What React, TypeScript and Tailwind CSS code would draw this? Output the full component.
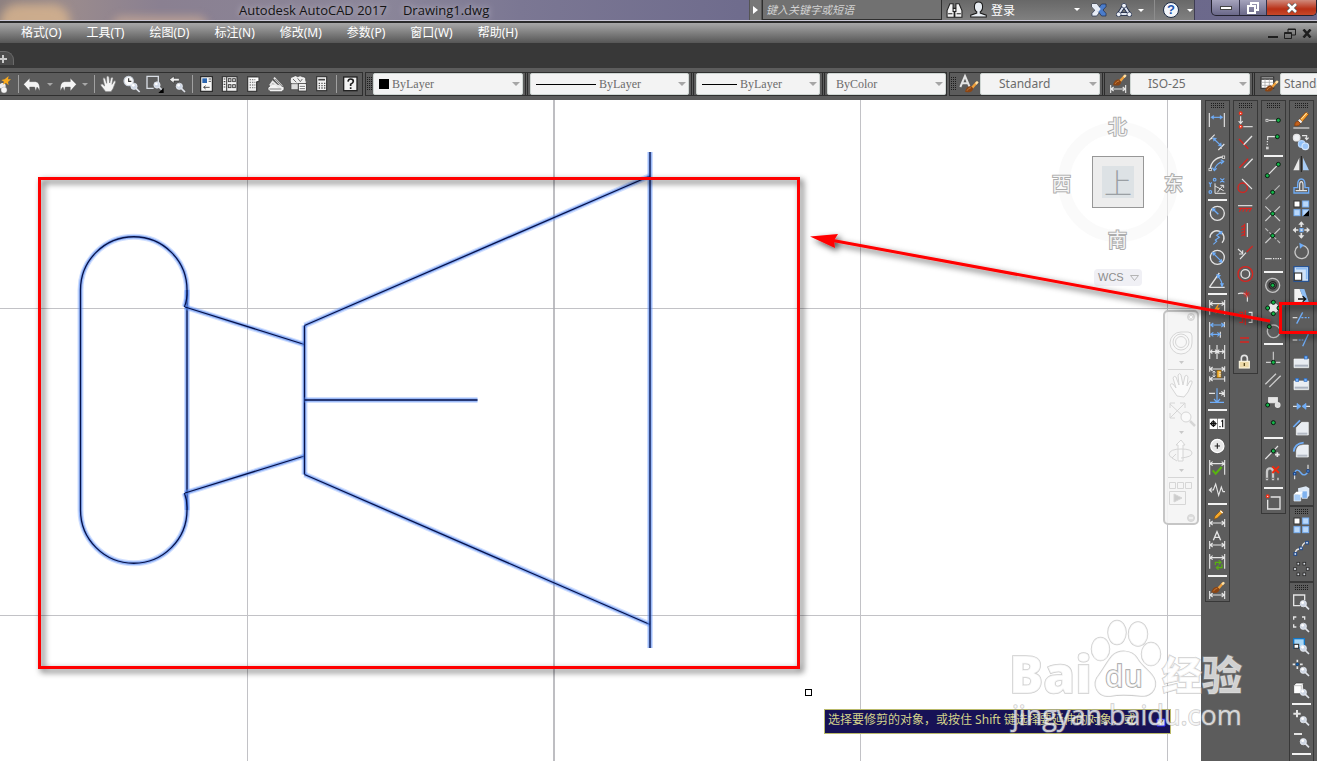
import React from "react";

const W = "#e4e4e4";
const B = "#6fadf8";
const R = "#d8241f";
const N = "#1c4587";

type Kids = { children?: React.ReactNode };

/* Tool glyphs share a 69 x 66 drawing grid, three units to the pixel. */
function Glyph({ children }: Kids) {
  return (
    <svg viewBox="0 0 69 66" className="block h-[22px] w-[23px]" fill="none" strokeWidth="3.4" stroke={W} aria-hidden="true">
      {children}
    </svg>
  );
}

const Dot = ({ x, y }: { x: number; y: number }) => (
  <circle cx={x} cy={y} r="6" fill="#12b648" stroke="#0c1a10" strokeWidth="3" />
);
const RedDot = ({ x, y }: { x: number; y: number }) => (
  <circle cx={x} cy={y} r="4" fill="#fff" stroke="#f03018" strokeWidth="4" />
);
const Node = ({ x, y }: { x: number; y: number }) => (
  <rect x={x - 4} y={y - 4} width="8" height="8" fill="#dce9fb" stroke={N} strokeWidth="3" />
);
const Lens = ({ x, y }: { x: number; y: number }) => (
  <g>
    <path d={`M${x + 6} ${y + 6}l11 11`} stroke="#dfe3ea" strokeWidth="5" />
    <circle cx={x} cy={y} r="9.5" fill="#cfd7e4" stroke="#eef2f8" strokeWidth="2" />
    <circle cx={x - 2} cy={y - 3} r="4" fill="#fff" stroke="none" />
  </g>
);
const Brush = ({ x, y }: { x: number; y: number }) => (
  <g stroke="none">
    <path d={`M${x + 18} ${y + 14}l16 -17l5 4l-15 18z`} fill="#f0a03c" />
    <path d={`M${x + 30} ${y + 2}l6 -6l5 4l-6 7z`} fill="#ffe2a8" />
    <path d={`M${x} ${y + 28}q4 -16 17 -17l8 7q-3 16 -25 10z`} fill="#8a4514" />
    <path d={`M${x + 6} ${y + 25}q5 -9 12 -9`} stroke="#c77734" strokeWidth="3" fill="none" />
  </g>
);
const DimLow = () => <path d="M11 36v24M56 36v24M12 48h43M20 42l-8 6l8 6M47 42l8 6l-8 6" />;
const DimHigh = () => <path d="M11 9v44M56 9v44M12 20h43M20 14l-8 6l8 6M47 14l8 6l-8 6" />;
const Tile = ({ x, y, plain, dark }: { x: number; y: number; plain?: boolean; dark?: boolean }) => (
  <g>
    <rect x={x} y={y} width="18" height="18" fill={plain ? "#fff" : "#b9d8fb"} stroke={plain ? "#333" : "#79b0f2"} strokeWidth="3" />
    {dark && <path d={`M${x + 19} ${y + 2}v18h-18z`} fill="#000" stroke="none" />}
  </g>
);
const Block = ({ d }: { d: string }) => <path d={d} fill="#e9edf2" stroke="#f8fafc" strokeWidth="2" />;

type Tool = { name: string; art: React.ReactNode } | null;

const dimensionTools: Tool[] = [
  { name: "Linear", art: <><path d="M10 12v42M55 12v42" /><g stroke={B} fill={B}><path d="M18 25h30" /><path d="M14 25l9-6v12zM51 25l-9-6v12z" strokeWidth="1" /></g></> },
  { name: "Aligned", art: <><path d="M9 28L26 11M37 57L55 39M15 20l4 4M43 49l4 4" /><g stroke={B} fill={B}><path d="M24 24l20 19" /><path d="M21 20l11 2l-9 9zM47 46l-11-2l9-9z" strokeWidth="1" /></g></> },
  { name: "Arc Length", art: <><path d="M13 50A38 38 0 0 1 51 12" strokeWidth="4" /><path d="M25 52A30 30 0 0 1 53 26" stroke={B} /><path d="M44 20l9 5l-8 8M19 44l6 9l7-7" stroke={B} /><g fill="#444" strokeWidth="2.5"><rect x="9" y="46" width="7" height="7" /><rect x="49" y="9" width="7" height="7" /></g></> },
  { name: "Ordinate", art: <><path d="M27 25v30h32M27 33l26 14M34 52L52 30M43 31h10v8" strokeWidth="3" /><g stroke={B}><circle cx="26" cy="14" r="4" /><circle cx="13" cy="51" r="4" /><path d="M43 10l12 12M55 10l-12 12M9 22l4 6l4-6M13 28v8" /></g></> },
  null,
  { name: "Radius", art: <><circle cx="34" cy="31" r="21" strokeWidth="4" /><path d="M37 34L23 20" stroke={B} strokeWidth="4" /><path d="M17 15l13 2l-10 10z" fill={B} stroke="none" /></> },
  { name: "Jogged", art: <><path d="M12 38A21 21 0 1 1 48 53" strokeWidth="4" /><path d="M46 22L32 31l8 6l-12 8l4 4l-10 9" stroke={B} /><path d="M50 17l-4 13l-9-9z" fill={B} stroke="none" /></> },
  { name: "Diameter", art: <><circle cx="34" cy="31" r="21" strokeWidth="4" /><path d="M24 21l20 20" stroke={B} /><path d="M18 15l13 2l-10 10zM50 47l-13-2l10-10z" fill={B} stroke="none" /></> },
  { name: "Angular", art: <><path d="M10 55h46M10 55L40 12" strokeWidth="4" /><path d="M36 22Q48 34 48 50" stroke={B} /><path d="M31 15l14 4l-10 10zM48 56l-6-13h12z" fill={B} stroke="none" /></> },
  null,
  { name: "Quick Dimension", art: <><DimHigh /><path d="M36 22l-12 16h9l-5 14l15-20h-9l5-10z" fill="#f59a1c" stroke="none" /></> },
  { name: "Baseline", art: <><path d="M11 9v46M55 9v16M43 38v18" /><path d="M14 18h40M14 46h27M22 12l-8 6l8 6M46 12l8 6l-8 6M22 40l-8 6l8 6M34 40l8 6l-8 6" stroke={B} /></> },
  { name: "Continue", art: <path d="M11 12v42M33 12v42M56 12v42M12 32h43M19 26l-6 6l6 6M27 26l6 6l-6 6M40 26l-6 6l6 6M48 26l6 6l-6 6" /> },
  { name: "Dimension Space", art: <><path d="M11 10v16M56 10v16M12 18h43M11 40v16M56 40v16M12 48h43M20 12l-8 6l8 6M47 12l8 6l-8 6M20 42l-8 6l8 6" /><rect x="33" y="22" width="12" height="22" fill="#f6b73c" stroke="#8a5a08" strokeWidth="2" /><path d="M39 28h6M39 34h6M39 39h6M24 24v18M20 29l4-5l4 5M20 37l4 5l4-5" strokeWidth="2.5" /></> },
  { name: "Dimension Break", art: <><path d="M9 25h18M39 25h14M55 14v22M46 19l8 6l-8 6" /><path d="M33 10v40M12 52h42M24 42l9 10l9-10" stroke={B} /></> },
  null,
  { name: "Tolerance", art: <><rect x="11" y="17" width="22" height="31" fill="#fff" stroke="none" /><rect x="35" y="17" width="21" height="31" fill="#fff" stroke="none" /><g stroke="#111"><circle cx="22" cy="32" r="6" /><path d="M12 32h20M22 22v20M42 43v-4M46 25l4-3v21" /></g></> },
  { name: "Center Mark", art: <><circle cx="34" cy="33" r="20" fill="#e8e8e8" stroke="#fff" /><path d="M34 25v16M26 33h16" stroke="#222" /></> },
  { name: "Inspection", art: <><DimHigh /><path d="M20 40l9 10l18-20" stroke="#58b40e" strokeWidth="6" /></> },
  { name: "Jogged Linear", art: <path d="M10 33h12l7-18l9 34l8-25l5 14h6M18 26l-8 7l8 7" /> },
  null,
  { name: "Dimension Edit", art: <><DimLow /><path d="M24 37l3-10L45 9l7 7L34 33z" fill="#f7a928" stroke="#7b4a12" strokeWidth="2" /><path d="M43 11l7 7" stroke="#fff" /></> },
  { name: "Dimension Text Edit", art: <><DimLow /><path d="M22 34L33 8l11 26M26 25h14" strokeWidth="4" /></> },
  { name: "Dimension Update", art: <><DimHigh /><g stroke="#58b40e" fill="none"><path d="M28 42v-8h14M48 40v10H34" /><path d="M38 28l7 6l-7 6M38 44l-7 6l7 6" /></g></> },
  null,
  { name: "Dimension Style", art: <><DimLow /><Brush x={16} y={12} /></> },
];

const constraintTools: Tool[] = [
  { name: "Coincident", art: <><RedDot x={20} y={13} /><path d="M20 22v20M14 36l6 8l6-8" /><RedDot x={20} y={53} /><path d="M28 53h28" /></> },
  { name: "Perpendicular", art: <><path d="M15 24l28 29" stroke={R} strokeWidth="4" /><path d="M29 41l25-26" strokeWidth="4" /></> },
  { name: "Parallel", art: <><path d="M16 44l26-27" stroke={R} strokeWidth="4" /><path d="M30 44l26-27" strokeWidth="4" /></> },
  { name: "Tangent", art: <><circle cx="26" cy="38" r="14" stroke={R} strokeWidth="4" /><path d="M24 12l30 30" /></> },
  { name: "Horizontal", art: <><path d="M12 26h43" /><path d="M14 34h40M22 34l-6 10M32 34l-6 10M42 34l-6 10M52 34l-6 10" stroke={R} /></> },
  { name: "Vertical", art: <><path d="M40 12v42" /><path d="M32 14v38M32 18l-10 6M32 27l-10 6M32 36l-10 6M32 45l-10 6" stroke={R} /></> },
  { name: "Collinear", art: <><path d="M12 24l15 14M26 28v11H15M18 54l18-19" /><path d="M38 33l18-18" stroke={R} /></> },
  { name: "Concentric", art: <><circle cx="34" cy="33" r="22" stroke={R} strokeWidth="4" /><circle cx="34" cy="33" r="13" strokeWidth="4" /></> },
  { name: "Smooth", art: <><path d="M12 26q12-4 24 2q6 10 4 22" /><path d="M38 16v22M27 27h22M30 20l16 15M46 20L30 35" stroke={R} strokeWidth="2.5" /></> },
  { name: "Symmetric", art: <><path d="M16 16h10v30H16M34 10v44" stroke={R} /><path d="M44 16h10v30H44" /></> },
  { name: "Equal", art: <path d="M18 27h27M18 39h27" stroke={R} strokeWidth="5" /> },
  { name: "Fix", art: <><path d="M22 32V22q0-9 9-9t9 9v10" strokeWidth="5" /><rect x="16" y="31" width="30" height="20" fill="#ecd9a8" stroke="#fbf5e0" /><path d="M31 36v9" stroke="#5a4a20" strokeWidth="4" /></> },
];

const snapTools: Tool[] = [
  { name: "Temporary Track Point", art: <><path d="M20 34h28" /><rect x="12" y="31" width="6" height="6" fill="#333" strokeWidth="2.5" /><Dot x={49} y={34} /></> },
  { name: "Snap From", art: <><path d="M40 17H17v10" /><path d="M16 30v16" strokeDasharray="4 4" /><rect x="12" y="47" width="8" height="8" fill="#ccc" stroke="none" /><Dot x={46} y={17} /></> },
  null,
  { name: "Endpoint", art: <><path d="M16 50l33-34" /><Dot x={16} y={50} /><Dot x={49} y={16} /></> },
  { name: "Midpoint", art: <><path d="M11 55l42-42" stroke="#b8b8b8" /><Dot x={32} y={34} /></> },
  { name: "Intersection", art: <><path d="M10 10l44 44M54 10L10 54" stroke="#ccc" /><Dot x={32} y={32} /></> },
  { name: "Apparent Intersection", art: <><path d="M10 10l44 44" stroke="#bbb" strokeDasharray="12 5" /><path d="M54 10L10 54" stroke="#ccc" /><Dot x={32} y={32} /></> },
  { name: "Extension", art: <><path d="M9 35h20" /><path d="M33 35h25" strokeDasharray="4 3" /></> },
  null,
  { name: "Center", art: <><circle cx="32" cy="31" r="21" stroke="#c4c4c4" strokeWidth="4" /><circle cx="32" cy="31" r="11" stroke="#222" /><Dot x={32} y={31} /></> },
  { name: "Quadrant", art: <><circle cx="34" cy="33" r="14" fill="#e8e8e8" /><Dot x={34} y={16} /><Dot x={34} y={50} /><Dot x={17} y={33} /><Dot x={51} y={33} /></> },
  { name: "Tangent", art: <><circle cx="35" cy="37" r="19" stroke="#b8b8b8" strokeWidth="4" /><Dot x={22} y={23} /></> },
  null,
  { name: "Perpendicular", art: <><path d="M12 46h43M34 14v32" stroke="#ccc" /><Dot x={34} y={46} /></> },
  { name: "Parallel", art: <path d="M10 46l32-32M22 54l34-34" strokeWidth="4" stroke="#ccc" /> },
  { name: "Insert", art: <><rect x="20" y="20" width="26" height="15" fill="#e8e8e8" /><path d="M20 36v6" /><circle cx="47" cy="42" r="7" fill="#ddd" /><Dot x={17} y={42} /></> },
  { name: "Node", art: <Dot x={34} y={29} /> },
  null,
  { name: "Nearest", art: <><path d="M10 54l38-39" /><Dot x={34} y={30} /><path d="M46 34v14M39 41h14" strokeWidth="5" /></> },
  { name: "None", art: <><path d="M15 52V26q0-10 9-10t9 10v26" strokeWidth="7" stroke="#c8c8c8" /><path d="M12 46h8M29 46h8" stroke="#777" /><path d="M31 10l20 20M51 10L31 30" stroke="#f0290c" strokeWidth="6" /><path d="M48 44v8" /></> },
  null,
  { name: "Object Snap Settings", art: <><path d="M26 18h28v36H17V26" strokeWidth="4" /><RedDot x={17} y={16} /></> },
];

const modifyTools: Tool[] = [
  { name: "Erase", art: <><path d="M10 57h48" /><path d="M29 30L48 9l8 7L37 38z" fill="#f7a02e" stroke="#7d3b0a" strokeWidth="2" /><path d="M34 30L51 11" stroke="#ffe9b4" strokeWidth="3" /><path d="M24 35l5-5l8 8l-5 5z" fill="#f6f0ea" stroke="none" /><path d="M14 50q-1-12 10-14l7 7q-2 10-17 7z" fill="#c2601c" stroke="#7d3b0a" strokeWidth="2" /></> },
  { name: "Copy", art: <><circle cx="20" cy="20" r="10" fill="#f0f2f5" /><circle cx="35" cy="39" r="10" fill="#8fc0f8" stroke="#b8d6fa" /><circle cx="46" cy="46" r="10" fill="#9cc6f7" stroke="#d6e7fb" /><path d="M36 14h14v10M45 20l5 6l6-6" /></> },
  { name: "Mirror", art: <><path d="M28 14v38H10z" fill="#eaeaea" stroke="none" /><path d="M34 9v48" stroke="#222" /><path d="M39 14v38h18z" fill="#a9cdf6" stroke="none" /></> },
  { name: "Offset", art: <><path d="M12 54h44V38H45v-8q0-18-11-18t-11 18v8H12z" stroke={B} strokeWidth="4" /><path d="M17 47h34M29 45V30q0-10 5-10t5 10v15" /></> },
  { name: "Array", art: <><Tile x={12} y={12} plain /><Tile x={38} y={12} /><Tile x={12} y={38} /><Tile x={38} y={38} dark /></> },
  { name: "Move", art: <><path d="M34 10v14M34 42v14M11 33h14M43 33h14" strokeWidth="5" /><path d="M34 7l9 10H25zM34 59l9-10H25zM8 33l10-9v18zM60 33l-10-9v18z" fill={W} stroke="none" /><rect x="30" y="29" width="9" height="9" fill="#ddd" stroke={B} /></> },
  { name: "Rotate", art: <><path d="M38 13A20 20 0 1 1 24 16" strokeWidth="4" stroke="#c8c8c8" /><path d="M28 5l14 8l-12 10z" fill={B} stroke="none" /></> },
  { name: "Scale", art: <><rect x="12" y="11" width="44" height="44" fill="#cfe2f8" stroke="#1e4f96" /><path d="M18 17h32v32" stroke="#8cbcf4" strokeWidth="5" /><rect x="13" y="30" width="22" height="22" fill="#fff" stroke="#333" /></> },
  { name: "Stretch", art: <><path d="M13 12h16l18 44H13z" fill="#f2f2f2" stroke="none" /><path d="M29 12h14l15 44H47z" fill="#8ebef5" stroke="none" /><path d="M24 42h22M38 34l9 8l-9 8" stroke="#111" strokeWidth="4" /></> },
  { name: "Trim", art: <><path d="M8 32h14" /><path d="M20 50l18-34" stroke={B} strokeWidth="4" /><path d="M34 32h24" stroke={B} strokeDasharray="6 4" /></> },
  { name: "Extend", art: <><path d="M8 33h14" /><path d="M26 33h14" stroke={B} strokeDasharray="6 3" /><path d="M38 52l17-36" stroke={B} strokeWidth="4" /></> },
  { name: "Break at Point", art: <><Block d="M12 24h44v26H12z" /><path d="M14 44h40" stroke="#aab2be" strokeWidth="6" /><rect x="43" y="15" width="9" height="9" fill={B} stroke="#2b68bb" strokeWidth="2" /></> },
  { name: "Break", art: <><Block d="M12 24h44v26H12z" /><path d="M14 44h40" stroke="#aab2be" strokeWidth="6" /><g fill={B} stroke="#2b68bb" strokeWidth="2"><rect x="17" y="16" width="9" height="9" /><rect x="42" y="16" width="9" height="9" /></g></> },
  { name: "Join", art: <><path d="M9 34h12M48 34h12" /><path d="M21 25l12 9l-12 9zM48 25l-12 9l12 9z" fill={B} stroke={B} strokeWidth="2" /></> },
  { name: "Chamfer", art: <><Block d="M19 54V32l16-16h20v38z" /><path d="M22 50h30" stroke="#b4bac4" strokeWidth="6" /><path d="M10 30l20-20" stroke={B} strokeWidth="5" /></> },
  { name: "Fillet", art: <><Block d="M19 54V36q2-18 20-18h16v36z" /><path d="M22 50h30" stroke="#b4bac4" strokeWidth="6" /><path d="M11 38q2-24 30-27" stroke={B} strokeWidth="5" /></> },
  { name: "Blend Curves", art: <><path d="M14 40v15M54 24V11" /><path d="M14 38c3-16 12-12 19-2s18 6 21-6" stroke={B} strokeWidth="4" /><circle cx="14" cy="38" r="4" fill={B} stroke={N} /><circle cx="54" cy="30" r="4" fill={B} stroke={N} /></> },
  { name: "Explode", art: <><path d="M24 16l24-6l10 6v22l-8 8l-24-4z" fill="#dde9f7" stroke="none" /><path d="M36 24h16v22H36z" fill="#7fb2ee" stroke="#eff5fc" strokeWidth="2" /><path d="M12 34h20v20H12z" fill="#a8ccf5" stroke="#f3f8fd" strokeWidth="2" /><path d="M12 34l7-8h20l-7 8z" fill="#fff" stroke="none" /></> },
];

const arrayTools: Tool[] = [
  { name: "Edit Array", art: <><Tile x={12} y={9} plain /><Tile x={38} y={9} /><Tile x={12} y={35} /><Tile x={38} y={35} /></> },
  { name: "Edit Polyline", art: <><path d="M16 50q0-14 14-14q6 0 8-12q4-8 14-8" strokeWidth="4" /><Node x={16} y={51} /><Node x={33} y={34} /><Node x={51} y={17} /></> },
  { name: "Edit Polar Array", art: <g fill="#d8dce2" stroke="#2a2a2a" strokeWidth="2.5"><rect x="21" y="10" width="8" height="8" /><rect x="39" y="10" width="8" height="8" /><rect x="11" y="26" width="8" height="8" /><rect x="49" y="26" width="8" height="8" /><rect x="21" y="42" width="8" height="8" /><rect x="39" y="42" width="8" height="8" /></g> },
];

const zoomTools: Tool[] = [
  { name: "Zoom Window", art: <><path d="M30 44H11V12h33v16" strokeWidth="4" /><Lens x={40} y={38} /></> },
  { name: "Zoom Dynamic", art: <><path d="M11 20v-8h8M36 12h8v8M11 34v8h8" strokeWidth="4" /><Lens x={40} y={40} /></> },
  { name: "Zoom Scale", art: <><rect x="11" y="11" width="32" height="28" fill="#a9d6f4" stroke="#1478c8" strokeWidth="4" /><rect x="12" y="28" width="14" height="12" fill="#fff" stroke="#333" /><Lens x={40} y={40} /></> },
  { name: "Zoom Center", art: <><path d="M22 8v8M22 28v8M8 22h8M30 22h8" strokeWidth="5" /><circle cx="22" cy="22" r="4" fill="#1767b8" stroke="#0d3b70" strokeWidth="2" /><Lens x={40} y={40} /></> },
  { name: "Zoom Object", art: <><path d="M11 20l7-8h22v24l-6 8H11z" fill="#fff" stroke="#333" strokeWidth="2" /><path d="M11 20h23v23M34 20l6-8" stroke="#aaa" strokeWidth="2" /><Lens x={40} y={40} /></> },
  null,
  { name: "Zoom In", art: <><path d="M10 20h22M21 9v22" strokeWidth="6" /><Lens x={40} y={38} /></> },
  { name: "Zoom Out", art: <><path d="M12 15h24" strokeWidth="6" /><Lens x={40} y={38} /></> },
  null,
  { name: "Zoom All", art: <><rect x="12" y="18" width="30" height="30" fill="#333" stroke="#222" /></> },
];

function Palette({ label, tools }: { label: string; tools: Tool[] }) {
  return (
    <div role="toolbar" aria-label={label} className="flex w-[25px] flex-col border border-[#383838] bg-[#5d5d5d]">
      <div className="flex h-2 shrink-0 items-center justify-center">
        <svg viewBox="0 0 14 5" className="h-[5px] w-3.5" aria-hidden="true">
          <path d="M0 .5h14M0 2.5h14M0 4.5h14" stroke="#1c1c1c" strokeDasharray="1 1" />
        </svg>
      </div>
      {tools.map((tool, i) =>
        tool ? (
          <button key={i} type="button" aria-label={tool.name} title={tool.name} className="h-[22px] shrink-0">
            <Glyph>{tool.art}</Glyph>
          </button>
        ) : (
          <div key={i} className="flex h-1.5 shrink-0 items-center px-0.5">
            <div className="h-0.5 w-full bg-[#f2f2f2]" />
          </div>
        ),
      )}
    </div>
  );
}

const standardTools: Tool[][] = [
  [
    { name: "Pan", art: <path d="M26 56L12 38q-3-6 4-5l7 6L18 18q1-6 6-2l5 15L29 12q3-6 7 0l2 18l4-16q5-4 6 2l-3 18l6-10q5-3 5 3l-8 20l-6 9z" fill="#f4f4f4" stroke="#777" strokeWidth="2" /> },
    { name: "Zoom Realtime", art: <><circle cx="26" cy="24" r="14" fill="#fbfbfb" stroke="#c9d0da" /><path d="M26 16v9h8" stroke="#333" /><Lens x={42} y={40} /></> },
    { name: "Zoom Window", art: <><path d="M32 46H12V10h34v18" stroke="#d8dde4" strokeWidth="4" /><Lens x={42} y={36} /><path d="M62 44v16H46z" fill="#000" stroke="none" /></> },
    { name: "Zoom Previous", art: <><path d="M10 20l14-11v7h16v8H24v7z" fill="#eee" stroke="#333" strokeWidth="2" /><Lens x={40} y={40} /></> },
  ],
  [
    { name: "Properties", art: <><rect x="17" y="11" width="35" height="44" fill="#f8f8f8" stroke="#222" /><rect x="22" y="16" width="14" height="14" fill="#2b66b0" stroke="none" /><path d="M41 18h7M41 25h7M26 43h18M32 38l-6 5l6 5" stroke="#333" strokeWidth="2.5" /></> },
    { name: "DesignCenter", art: <><rect x="13" y="11" width="44" height="44" fill="#f4f4f4" stroke="#333" /><path d="M26 12v42M17 18h5M17 26h5M17 34h5M17 42h5" stroke="#444" /><g fill="#ccc" stroke="#333" strokeWidth="2.5"><rect x="31" y="17" width="8" height="9" /><rect x="44" y="17" width="8" height="9" /><rect x="31" y="35" width="8" height="9" /><rect x="44" y="35" width="8" height="9" /></g></> },
    { name: "Tool Palettes", art: <><rect x="20" y="11" width="27" height="44" fill="#f2f2f2" stroke="#333" /><path d="M20 12h34v14h-7" fill="#fff" stroke="#444" /><path d="M26 20h17M26 28h17M26 36h17M26 44h17" stroke="#888" strokeDasharray="4 3" strokeWidth="4" /></> },
    { name: "Sheet Set Manager", art: <><path d="M12 44l14-12l24 4l10 6v8l-8 6H20l-8-6z" fill="#f4f4f4" stroke="#444" strokeWidth="2" /><path d="M18 38l8-12l22 20M30 14l24 26" stroke="#e8e8e8" strokeWidth="6" /><path d="M16 48h36M34 18l22 24" stroke="#444" strokeWidth="2" /></> },
    { name: "Markup Set Manager", art: <><path d="M10 22q-2-10 8-11q8-6 14 0q8-5 14 0q12 0 10 11q5 6-2 12H16q-8-4-6-12z" fill="#eee" stroke="#333" strokeWidth="2" /><path d="M12 32h22v18H12z" fill="#ddd" stroke="#444" strokeWidth="2" /><rect x="34" y="32" width="24" height="22" fill="#fff" stroke="#333" strokeWidth="2.5" /><path d="M38 40h16M38 47h16M18 18l10 10M32 16l8 10M46 18l-6 8" stroke="#555" strokeWidth="2.500" /></> },
    { name: "QuickCalc", art: <><rect x="20" y="11" width="30" height="42" fill="#f2f2f2" stroke="#333" /><path d="M25 20h20" stroke="#444" strokeWidth="5" /><path d="M26 31h20M26 38h20M26 45h20" stroke="#555" strokeWidth="4" strokeDasharray="4 4" /></> },
  ],
];

function ToolButton({ name, children }: { name: string } & Kids) {
  return (
    <button type="button" aria-label={name} title={name} className="flex w-[23px] shrink-0 items-center justify-center">
      <Glyph>{children}</Glyph>
    </button>
  );
}

const Rule = () => (
  <div className="flex w-1.5 shrink-0 justify-center py-0.5">
    <div className="w-px bg-[#a0a0a0]" />
  </div>
);
const Bars = () => (
  <div className="flex w-[7px] shrink-0 justify-center gap-px">
    <div className="w-px bg-[#2c2c2c]" />
    <div className="w-px bg-[#2c2c2c]" />
  </div>
);
const Grip = () => (
  <svg viewBox="0 0 5 14" className="mx-px h-3.5 w-[5px] shrink-0 self-center" aria-hidden="true">
    <path d="M.5 0v14M2.5 0v14M4.5 0v14" stroke="#1c1c1c" strokeDasharray="1 1" />
  </svg>
);
const Caret = ({ label }: { label: string }) => (
  <button type="button" aria-label={label} className="flex w-3 shrink-0 items-center justify-center">
    <svg viewBox="0 0 6 3" className="h-[3px] w-1.5" aria-hidden="true"><path d="M0 0h6L3 3z" fill="#a8a8a8" /></svg>
  </button>
);

function Combo({ label, value, box, field, children }: { label: string; value: string; box: string; field: string } & Kids) {
  return (
    <div className={`relative h-[22px] shrink-0 ${box}`}>
      <select aria-label={label} defaultValue={value} className={`block h-full w-full appearance-none rounded-[2px] border border-[#cfd6d3] bg-[#f3f3f3] text-[#6b6b6b] ${field}`}>
        <option>{value}</option>
      </select>
      <div className="pointer-events-none absolute inset-y-0 left-1.5 flex items-center">{children}</div>
      <svg viewBox="0 0 8 4" className="pointer-events-none absolute top-[9px] right-[3px] h-1 w-2" aria-hidden="true"><path d="M0 0h8L4 4z" fill="#a6a6a6" /></svg>
    </div>
  );
}

const serif = "font-['Liberation_Serif',serif] text-[12px]";
const sans = "font-['Noto_Sans',sans-serif] text-[12px]";

function TitleBar() {
  return (
    <header className="flex h-[21px] shrink-0 border-b border-[#c9c7d6] bg-[linear-gradient(90deg,#8d8080_0,#9a8b8d_70px,#8a8091_160px,#8b8699_380px,#7b7793_520px,#6f6c8d_740px,#6b688b_100%)]">
      <div className="relative min-w-0 flex-1 overflow-hidden">
        <div className="absolute top-1 left-0 h-9 w-[70px] rounded-full bg-[#d9b58f]/80 blur-[5px]" />
        <div className="absolute top-4 left-28 h-5 w-24 rounded-full bg-[#c9a995]/70 blur-[4px]" />
        <h1 className="relative flex gap-4 pl-[239px] font-['Open_Sans',sans-serif] text-[13px] leading-5 whitespace-nowrap text-[#141414] [text-shadow:0_0_6px_#cfcbd8]">
          <span>Autodesk AutoCAD 2017</span>
          <span>Drawing1.dwg</span>
        </h1>
      </div>
      <div className="flex w-[445px] shrink-0 bg-[linear-gradient(#686868,#808080)]">
        <button type="button" aria-label="Toggle search" className="flex w-[13px] items-center justify-center border-x border-[#555] bg-[#777]">
          <svg viewBox="0 0 5 8" className="h-2 w-[5px]" aria-hidden="true"><path d="M0 0l5 4l-5 4z" fill="#fff" /></svg>
        </button>
        <input aria-label="搜索" placeholder="键入关键字或短语" className="w-[180px] border border-t-0 border-[#2e2e2e] bg-[#717171] px-[3px] font-['Noto_Sans_CJK_SC',sans-serif] text-[11px] text-white italic placeholder:text-[#d2d2d2]" />
        <button type="button" aria-label="搜索" className="w-6 pl-1">
          <svg viewBox="0 0 48 48" className="h-[17px] w-[17px]" fill="#f3f3f3" stroke="#222" strokeWidth="3" aria-hidden="true">
            <path d="M11 5h9v11l3 6v21H3V24zM28 5h9l8 19v19H25V22l3-6z" /><path d="M20 18h8v9h-8z" /><path d="M6 33h12M30 33h12" />
          </svg>
        </button>
        <button type="button" className="flex w-[120px] items-center gap-1 pb-px pl-1 font-['Noto_Sans_CJK_SC',sans-serif] text-[12px] text-white">
          <svg viewBox="0 0 48 48" className="h-[17px] w-[17px]" fill="#e8edf3" stroke="#1a1a1a" strokeWidth="3" aria-hidden="true">
            <path d="M24 3c-17 0-12 24-5 27v4L2 40v5h44v-5l-17-6v-4c7-3 12-27-5-27z" />
          </svg>
          登录
          <svg viewBox="0 0 6 3" className="mr-1.5 ml-auto h-[3px] w-1.5" aria-hidden="true"><path d="M0 0h6L3 3z" fill="#fff" /></svg>
        </button>
        <button type="button" aria-label="Exchange" className="flex w-[26px] items-center justify-center">
          <svg viewBox="0 0 48 42" className="h-[14px] w-4" stroke="#1b2747" strokeWidth="2" aria-hidden="true">
            <path d="M3 3h14l14 18l-14 18H3v-8l9-10L3 11z" fill="#e8edf6" /><path d="M45 3H32L18 21l14 18h13v-8l-9-10l9-10z" fill="#4a7ccb" /><path d="M3 3h14l12 15l-7 9L12 21L3 11z" fill="#e8edf6" stroke="none" />
          </svg>
        </button>
        <button type="button" aria-label="Autodesk A360" className="flex w-[42px] items-center gap-1.5 pl-1">
          <svg viewBox="0 0 48 42" className="h-[14px] w-4" fill="none" aria-hidden="true">
            <path d="M24 8L8 33h32z" stroke="#1b2747" strokeWidth="11" /><path d="M24 8L8 33h32z" stroke="#dfe6f2" strokeWidth="6" /><g fill="#eef2f9" stroke="#1b2747" strokeWidth="2"><circle cx="24" cy="8" r="7" /><circle cx="8" cy="34" r="7" /><circle cx="40" cy="34" r="7" /></g>
          </svg>
          <svg viewBox="0 0 6 3" className="h-[3px] w-1.5" aria-hidden="true"><path d="M0 0h6L3 3z" fill="#fff" /></svg>
        </button>
        <button type="button" aria-label="帮助" className="flex flex-1 items-center gap-2 border-l border-[#8d8d8d] pl-2">
          <span className="flex h-4 w-4 items-center justify-center rounded-full border border-[#1d2b45] bg-[#f3f6fb] font-['Liberation_Sans',sans-serif] text-[13px] font-bold text-[#1f55ad]">?</span>
          <svg viewBox="0 0 6 3" className="h-[3px] w-1.5" aria-hidden="true"><path d="M0 0h6L3 3z" fill="#fff" /></svg>
        </button>
      </div>
      <div className="flex w-[123px] shrink-0 border-l border-[#3e3c52] pl-4">
        <div className="flex h-4 flex-1 overflow-hidden rounded-b-[5px] border border-t-0 border-[#23222f] bg-[linear-gradient(#a5a3bc,#6a6889)]">
          <button type="button" aria-label="最小化" className="flex w-[28px] items-center justify-center border-r border-[#33324a]">
            <span className="h-1 w-3 border border-[#444] bg-white" />
          </button>
          <button type="button" aria-label="还原" className="flex w-[27px] items-center justify-center border-r border-[#33324a]">
            <svg viewBox="0 0 12 12" className="h-3 w-3" fill="none" stroke="#fff" strokeWidth="2" aria-hidden="true"><path d="M4 3V1h7v7H9" /><path d="M1 4h7v7H1z" /></svg>
          </button>
          <button type="button" aria-label="关闭" className="flex flex-1 items-center justify-center bg-[linear-gradient(#d08a7c,#b93016_60%,#c8482a)]">
            <svg viewBox="0 0 12 10" className="h-2.5 w-3" fill="none" aria-hidden="true"><path d="M2 1l8 8M10 1L2 9" stroke="#555" strokeWidth="4" /><path d="M2 1l8 8M10 1L2 9" stroke="#fff" strokeWidth="2.5" /></svg>
          </button>
        </div>
      </div>
    </header>
  );
}

const menus = ["格式(O)", "工具(T)", "绘图(D)", "标注(N)", "修改(M)", "参数(P)", "窗口(W)", "帮助(H)"];

function MenuBar() {
  return (
    <nav className="flex h-[22px] shrink-0 items-center gap-px border-t-2 border-[#2b2b2b] bg-[linear-gradient(#a8a8a8,#565656)] pl-[9px]">
      {menus.map((m) => (
        <button key={m} type="button" className="px-3 font-['Noto_Sans','Noto_Sans_CJK_SC',sans-serif] text-[12px] leading-5 whitespace-nowrap text-white">{m}</button>
      ))}
      <div className="ml-auto flex items-center gap-1.5 pr-[5px]">
        <button type="button" aria-label="最小化图形" className="flex h-3 w-2.5 items-end"><span className="mb-px h-0.5 w-full bg-[#1f1f1f]" /></button>
        <button type="button" aria-label="还原图形"><svg viewBox="0 0 12 11" className="block h-[11px] w-3" fill="none" stroke="#1f1f1f" aria-hidden="true"><path d="M4 4V1h7.500v6H8M4 1.500h8M.5 4.500h7v6h-7zM0 5.500h8" /></svg></button>
        <button type="button" aria-label="关闭图形"><svg viewBox="0 0 10 9" className="block h-[9px] w-2.5" aria-hidden="true"><path d="M1.500.5l7 8M8.500.5l-7 8" stroke="#1f1f1f" strokeWidth="2.600" /></svg></button>
      </div>
    </nav>
  );
}

function RibbonRow() {
  return (
    <div className="flex h-8 shrink-0 overflow-hidden bg-[#5c5c5c] py-1">
      <div className="flex shrink-0 border-y border-r border-[#2f2f2f]">
        <button type="button" aria-label="Match Properties" className="flex w-[15px] shrink-0 items-center justify-end overflow-hidden pr-1">
          <svg viewBox="0 0 45 60" className="h-5 w-[15px] shrink-0" aria-hidden="true">
            <circle cx="20" cy="36" r="9" fill="#eee" /><circle cx="24" cy="48" r="9" fill="#f6f6f6" stroke="#888" /><path d="M38 6l-2 10l9 0l-9 8l2 10l-8-7l-10 5l4-9l-8-5l10-2z" fill="#f7a91e" />
          </svg>
        </button>
        <Rule />
        <ToolButton name="Undo"><path d="M8 34L26 16v10h18q14 2 12 28q-5-10-8-12l-4 12l-3-12H26v12z" fill="#f5f5f5" stroke="#555" strokeWidth="1" /></ToolButton>
        <Caret label="Undo history" />
        <ToolButton name="Redo"><path d="M61 34L43 16v10H25q-14 2-12 28q5-10 8-12l4 12l3-12h15v12z" fill="#f5f5f5" stroke="#555" strokeWidth="1" /></ToolButton>
        <Caret label="Redo history" />
        {standardTools.map((group, g) => (
          <React.Fragment key={g}>
            <Rule />
            {group.map((tool) => tool && <ToolButton key={tool.name} name={tool.name}>{tool.art}</ToolButton>)}
          </React.Fragment>
        ))}
        <Rule />
        <ToolButton name="Help">
          <rect x="14" y="12" width="40" height="41" fill="#f2f2f2" stroke="#222" strokeWidth="4" />
          <path d="M27 26q1-8 8-8q8 0 8 7q0 5-8 9v5M35 43v5" stroke="#1c1c1c" strokeWidth="5" />
        </ToolButton>
      </div>
      <div className="ml-0.5 flex shrink-0 border border-[#2f2f2f]">
        <Grip />
        <Combo label="Color" value="ByLayer" box="w-[150px]" field={`${serif} pl-[18px]`}><span className="h-2.5 w-2.5 bg-black" /></Combo>
        <Bars />
        <Combo label="Linetype" value="ByLayer" box="w-[159px]" field={`${serif} pl-[68px]`}><span className="h-px w-[60px] bg-black" /></Combo>
        <Bars />
        <Combo label="Lineweight" value="ByLayer" box="w-[124px]" field={`${serif} pl-[43px]`}><span className="h-px w-[35px] bg-black" /></Combo>
        <Bars />
        <Combo label="Plot style" value="ByColor" box="w-[119px]" field={`${serif} pl-2`} />
      </div>
      <div className="ml-0.5 flex min-w-0 flex-1 border-y border-l border-[#2f2f2f]">
        <Grip />
        <ToolButton name="Text Style"><path d="M10 42L24 9l14 33M15 31h18" strokeWidth="6" /><Brush x={24} y={28} /></ToolButton>
        <Combo label="Text style" value="Standard" box="w-[120px]" field={`${sans} pl-[18px]`} />
        <Bars />
        <ToolButton name="Dimension Style"><DimLow /><Brush x={18} y={8} /></ToolButton>
        <Combo label="Dimension style" value="ISO-25" box="w-[120px]" field={`${sans} pl-[17px]`} />
        <Bars />
        <ToolButton name="Table Style"><rect x="12" y="12" width="38" height="34" fill="#fff" stroke="#333" /><path d="M12 18h38" stroke="#444" strokeWidth="5" /><path d="M12 28h38M12 37h38M24 18v28M37 18v28" stroke="#999" strokeWidth="2" /><Brush x={24} y={26} /></ToolButton>
        <Combo label="Table style" value="Standard" box="w-[120px]" field={`${sans} pl-[3px]`} />
      </div>
    </div>
  );
}

const lampPaths = [
  "M80.500 290A53.250 53.250 0 0 1 187 290",
  "M80.500 290V510",
  "M187 290V510",
  "M80.500 510A53.250 53.250 0 0 0 187 510",
  "M187 290Q187.500 299 184.500 307",
  "M187 510Q187.500 501 184.500 493",
  "M185 307L304.500 344.500",
  "M185 493L304.500 456",
  "M304.500 325.500V474.500",
  "M304.500 325.500L650 176",
  "M304.500 474.500L650 624.500",
  "M304.500 400H477.500",
  "M650 152V648",
];

function NavBar() {
  const item = "flex w-full items-center justify-center";
  return (
    <div role="toolbar" aria-label="Navigation" className="absolute top-[210px] right-[2px] flex w-9 flex-col items-center rounded-[5px] border-2 border-[#c6c6c6] bg-[#f4f4f4]/90 px-0.5">
      <svg viewBox="0 0 32 211" className="h-[211px] w-8" fill="none" stroke="#d6d6d6" aria-hidden="true">
        <circle cx="26" cy="5" r="3.500" fill="#ddd" /><path d="M24.500 3.500l3 3M27.500 3.500l-3 3" stroke="#fff" />
        <path d="M16 20h7q4 0 4 4v7a11 11 0 1 1-11-11z" fill="#f8f8f8" /><circle cx="16" cy="30" r="5.500" /><circle cx="16" cy="30" r="8" />
        <path d="M14 49h5l-2.500 3z" fill="#c9c9c9" stroke="none" /><path d="M3 57.500h26M3 165.500h26" />
        <path d="M12 84L6 75q-2-4 2-3l3 4L8 66q1-3 3-1l3 8l-1-10q2-3 3 0l2 10l2-9q2-2 3 1l-1 9l3-5q3-1 2 2l-4 9l-4 5z" fill="#fafafa" />
        <path d="M5 92l15 14M20 91L5 106M5 96v-5h5M15 91h5v5M5 101v5h5" /><circle cx="21" cy="105" r="5" fill="#fafafa" /><path d="M25 109l5 5" strokeWidth="2.500" />
        <path d="M14 119h5l-2.500 3z" fill="#c9c9c9" stroke="none" />
        <path d="M13 149v-16h-2l5-5l4 5h-2v16z" fill="#fafafa" /><path d="M8 146q-4-1-4-4q1-5 12-5t11 4q0 4-11 5M11 142l-4 4l5 3" />
        <path d="M14 157h5l-2.500 3z" fill="#c9c9c9" stroke="none" />
        <path d="M4.500 170.500h6v6h-6zM12.500 170.500h6v6h-6zM20.500 170.500h6v6h-6zM4.500 179.500h16v13h-16z" /><path d="M9 182l8 4l-8 4z" fill="#ccc" />
        <circle cx="26" cy="206" r="3.500" fill="#ddd" /><path d="M24 206h4" stroke="#fff" />
      </svg>
      <div className="absolute inset-x-0 top-3 bottom-4 flex flex-col justify-between">
        <button type="button" aria-label="SteeringWheels" className={`${item} h-11`} />
        <button type="button" aria-label="Pan" className={`${item} h-8`} />
        <button type="button" aria-label="Zoom Extents" className={`${item} h-9`} />
        <button type="button" aria-label="Orbit" className={`${item} h-9`} />
        <button type="button" aria-label="ShowMotion" className={`${item} h-8`} />
      </div>
    </div>
  );
}

function ViewCube() {
  const mark = "absolute font-['Noto_Sans_CJK_SC',sans-serif] text-[19px] leading-6 text-[#f6f6f6] [paint-order:stroke_fill] [-webkit-text-stroke:2px_#adadad]";
  return (
    <div className="absolute top-[14px] right-[16px] h-[176px] w-[134px]">
      <div className="absolute top-2 left-[7px] h-[120px] w-[120px] rounded-full border-[12px] border-[#f7f7f7]/60" />
      <span className={`${mark} top-0 left-[57px]`}>北</span>
      <span className={`${mark} top-[57px] left-px`}>西</span>
      <span className={`${mark} top-[57px] left-[113px]`}>东</span>
      <span className={`${mark} top-[113px] left-[57px]`}>南</span>
      <button type="button" aria-label="上" className="absolute top-[42px] left-[41px] flex h-[52px] w-[52px] items-center justify-center border border-[#979797] bg-[#ededed]">
        <span className="flex h-8 w-8 items-center justify-center bg-[#dde2e5] font-['Noto_Sans_CJK_SC',sans-serif] text-[28px] leading-8 font-light text-[#9a9fa3]">上</span>
      </button>
      <button type="button" className="absolute top-[155px] left-[43px] flex h-[17px] w-[48px] items-center gap-1.5 rounded-[4px] bg-[#f0f0f5] pl-1 font-['Liberation_Sans',sans-serif] text-[11px] text-[#8c8c8c]">
        WCS
        <svg viewBox="0 0 9 6" className="h-1.5 w-[9px]" fill="none" stroke="#b4b4b4" aria-hidden="true"><path d="M.5.5h8l-4 5z" /></svg>
      </button>
    </div>
  );
}

function Canvas() {
  return (
    <main className="relative min-w-0 flex-1 overflow-hidden bg-white">
      <svg viewBox="0 100 1201 661" preserveAspectRatio="xMinYMin slice" className="absolute inset-0 h-full w-full" fill="none" role="img" aria-label="Drawing1.dwg">
        <path d="M247.500 100V761M860.500 100V761M1167.500 100V761M0 308.500H1201M0 615.500H1201" stroke="#c2c2c6" />
        <path d="M554 100V761" stroke="#a9a9ae" strokeWidth="1.500" />
        {lampPaths.map((d) => (
          <g key={d}>
            <path d={d} stroke="#6c9bff" strokeOpacity=".32" strokeWidth="6" />
            <path d={d} stroke="#4a80ee" strokeOpacity=".5" strokeWidth="3.500" />
            <path d={d} stroke="#06124a" strokeWidth="1.300" />
          </g>
        ))}
        <rect x="805.500" y="689.500" width="6" height="6" stroke="#000" fill="#fff" />
      </svg>
      <ViewCube />
      <NavBar />
      <div role="status" className="absolute right-[30px] bottom-[27px] flex h-[25px] w-[347px] items-center border border-[#b9b96a] bg-[#171256] pb-1 pl-[3px] font-['Noto_Sans','Noto_Sans_CJK_SC',sans-serif] text-[12px] whitespace-nowrap text-[#d3d38c]">
        选择要修剪的对象，或按住 Shift 键选择要延伸的对象，或
        <svg viewBox="0 0 10 14" className="absolute top-1 right-1 h-3.5 w-2.5" aria-hidden="true"><path d="M1 5h8v7H1z" fill="#ddd" stroke="#22f" /><path d="M5 1v7M3 6l2 3l2-3" stroke="#444" fill="none" /></svg>
      </div>
    </main>
  );
}

/* Callout frame, arrow and site logo that lie over the whole window. */
function Overlay() {
  return (
    <svg viewBox="0 0 1317 761" preserveAspectRatio="xMinYMin slice" className="pointer-events-none absolute inset-0 h-full w-full" fill="none" aria-hidden="true">
      <defs>
        <filter id="cast" x="-5%" y="-20%" width="110%" height="140%" filterUnits="objectBoundingBox">
          <feDropShadow dx="3" dy="3" stdDeviation="3" floodColor="#000" floodOpacity=".7" />
        </filter>
      </defs>
      <g filter="url(#cast)">
        <rect x="39.500" y="178.500" width="759" height="489" stroke="#f00" strokeWidth="3" />
        <path d="M833 240.500L1270 321" stroke="#f00" strokeWidth="3" />
        <path d="M810 236.500L838 234l-4 6.500l1 7.500z" fill="#f00" />
        <path d="M1320 303.500H1280.500v29H1320" stroke="#f00" strokeWidth="3" />
      </g>
      <g fill="#fff" fillOpacity=".74" stroke="#9c9c9c" strokeOpacity=".5" strokeWidth="1.500" paintOrder="stroke">
        <text x="1009" y="693" fontFamily="'Open Sans', sans-serif" fontWeight="800" fontSize="51">Bai</text>
        <ellipse cx="1100.500" cy="649" rx="9" ry="11.500" /><ellipse cx="1117" cy="632.500" rx="9" ry="12" /><ellipse cx="1138" cy="634" rx="9.500" ry="12" /><ellipse cx="1151" cy="654" rx="9.500" ry="11.500" />
        <path d="M1112 656c7-7 20-6 25 2c4 7 10 11 15 17c8 10 1 22-11 21c-10-1-20-2-30 0c-14 2-20-12-12-21c5-7 8-13 13-19z" />
        <text x="1105" y="687" fontFamily="'Open Sans', sans-serif" fontWeight="600" fontSize="30" stroke="#777" strokeOpacity=".7">du</text>
        <text x="1162" y="690" fontFamily="'Noto Sans CJK SC', sans-serif" fontWeight="900" fontSize="40">经验</text>
        <text x="1012" y="725" fontFamily="'Open Sans', sans-serif" fontWeight="500" fontSize="27">jingyan.baidu.com</text>
      </g>
    </svg>
  );
}

export default function App() {
  return (
    <div className="relative flex h-screen flex-col overflow-hidden bg-[#5c5c5c]">
      <TitleBar />
      <MenuBar />
      <div className="flex h-[25px] shrink-0 items-end bg-[#383838] pb-[3px]">
        <button type="button" aria-label="新图形" className="flex h-3.5 w-3.5 items-center rounded-tr-[9px] border-t border-r border-[#6a6a6a] bg-[#4c4c4c]">
          <svg viewBox="0 0 8 8" className="h-2 w-2" aria-hidden="true"><path d="M3 0v8M-1 4h8" stroke="#c9c9c9" strokeWidth="2" /></svg>
        </button>
      </div>
      <RibbonRow />
      <div className="flex min-h-0 flex-1">
        <Canvas />
        <aside className="flex shrink-0 items-start gap-[3px] overflow-hidden bg-[#5c5c5c] pr-[3px] pl-1">
          <Palette label="标注" tools={dimensionTools} />
          <Palette label="几何约束" tools={constraintTools} />
          <Palette label="对象捕捉" tools={snapTools} />
          <div className="flex flex-col">
            <Palette label="修改" tools={modifyTools} />
            <Palette label="修改 II" tools={arrayTools} />
            <Palette label="缩放" tools={zoomTools} />
          </div>
        </aside>
      </div>
      <Overlay />
    </div>
  );
}
